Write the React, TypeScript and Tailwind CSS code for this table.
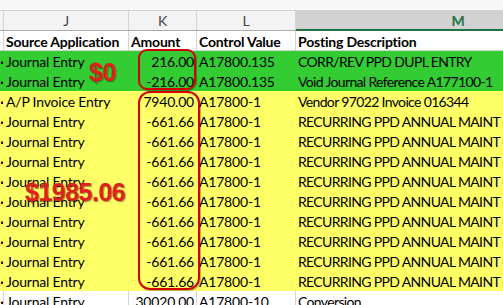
import React from 'react';

type Row = {
  fill: 'green' | 'yellow' | 'white';
  src: string;
  amt: string;
  ctrl: string;
  desc: string;
};

const rows: Row[] = [
  { fill: 'green', src: 'Journal Entry', amt: '216.00', ctrl: 'A17800.135', desc: 'CORR/REV PPD DUPL ENTRY' },
  { fill: 'green', src: 'Journal Entry', amt: '-216.00', ctrl: 'A17800.135', desc: 'Void Journal Reference A177100-1' },
  { fill: 'yellow', src: 'A/P Invoice Entry', amt: '7940.00', ctrl: 'A17800-1', desc: 'Vendor 97022 Invoice 016344' },
  ...Array.from({ length: 9 }, () => ({
    fill: 'yellow' as const,
    src: 'Journal Entry',
    amt: '-661.66',
    ctrl: 'A17800-1',
    desc: 'RECURRING PPD ANNUAL MAINT 4100',
  })),
  { fill: 'white', src: 'Journal Entry', amt: '30020.00', ctrl: 'A17800-10', desc: 'Conversion' },
];

const rowBg = {
  green: 'bg-[#33cc33]',
  yellow: 'bg-[#ffff66]',
  white: 'bg-white',
};

const cellBorder = {
  green: 'border-transparent',
  yellow: 'border-transparent',
  white: 'border-[#d4d4d4]',
};

export default function App() {
  return (
    <div className="relative w-[503px] h-[305px] overflow-hidden bg-white font-['Lato','Liberation_Sans',sans-serif] text-[14px] tracking-[-0.2px] text-black">
      {/* top strip */}
      <div className="h-[11px] bg-[#f7f7f7] border-b border-[#d5d5d5]" />

      {/* column letters */}
      <div className="flex h-[20px] bg-[#f3f3f3] border-b border-[#ababab] text-[#444] leading-[19px]">
        <div className="w-[4px] shrink-0 border-r border-[#d4d4d4]" />
        <div className="w-[125px] shrink-0 border-r border-[#d4d4d4] text-center">J</div>
        <div className="w-[68px] shrink-0 border-r border-[#d4d4d4] text-center">K</div>
        <div className="w-[99px] shrink-0 border-r border-[#d4d4d4] text-center">L</div>
        <div className="w-[324px] shrink-0 bg-[#d2d2d2] border-b-2 border-[#217346] text-center font-bold text-[#217346] h-[20px]">M</div>
      </div>

      {/* header row */}
      <div className="flex h-[20px] bg-white border-b border-[#d4d4d4] font-bold leading-[22px]">
        <div className="w-[4px] shrink-0 border-r border-[#d4d4d4]" />
        <div className="w-[125px] shrink-0 border-r border-[#d4d4d4] pl-[2px] whitespace-nowrap overflow-hidden">Source Application</div>
        <div className="w-[68px] shrink-0 border-r border-[#d4d4d4] pl-[2px] whitespace-nowrap overflow-hidden">Amount</div>
        <div className="w-[99px] shrink-0 border-r border-[#d4d4d4] pl-[2px] whitespace-nowrap overflow-hidden">Control Value</div>
        <div className="w-[324px] shrink-0 pl-[2px] whitespace-nowrap">Posting Description</div>
      </div>

      {rows.map((r, i) => (
        <div key={i} className={`flex h-[20px] leading-[22px] border-b ${rowBg[r.fill]} ${cellBorder[r.fill]}`}>
          {/* tail of column I's text, clipped */}
          <div className={`w-[4px] shrink-0 border-r ${cellBorder[r.fill]} overflow-hidden flex justify-end`}>
            <span className="whitespace-nowrap mr-[-1px] font-bold">·</span>
          </div>
          <div className={`w-[125px] shrink-0 border-r ${cellBorder[r.fill]} pl-[2px] whitespace-nowrap`}>{r.src}</div>
          <div className={`w-[68px] shrink-0 border-r ${cellBorder[r.fill]} pr-[2px] text-right whitespace-nowrap`}>{r.amt}</div>
          <div className={`w-[99px] shrink-0 border-r ${cellBorder[r.fill]} pl-[2px] whitespace-nowrap`}>{r.ctrl}</div>
          <div className="w-[324px] shrink-0 pl-[2px] whitespace-nowrap overflow-hidden tracking-[-0.65px]">{r.desc}</div>
        </div>
      ))}

      {/* annotations */}
      <div className="absolute left-[138px] top-[49px] w-[58px] h-[41px] rounded-[9px] border-2 border-[#d40000] shadow-[1px_1px_1px_rgba(0,0,0,0.3)]" />
      <div className="absolute left-[138px] top-[91px] w-[62px] h-[199px] rounded-[12px] border-2 border-[#d40000] shadow-[1px_1px_1px_rgba(0,0,0,0.3)]" />
      <div className="absolute left-[89px] top-[60px] font-['Liberation_Sans',Arial,sans-serif] font-bold text-[25px] leading-[25px] tracking-[-0.5px] text-[#e0201b] [text-shadow:1px_1px_1px_rgba(0,0,0,0.45)]">$0</div>
      <div className="absolute left-[25px] top-[180px] font-['Liberation_Sans',Arial,sans-serif] font-bold text-[25px] leading-[25px] tracking-[-0.5px] text-[#e0201b] [text-shadow:1px_1px_1px_rgba(0,0,0,0.45)]">$1985.06</div>
    </div>
  );
}
